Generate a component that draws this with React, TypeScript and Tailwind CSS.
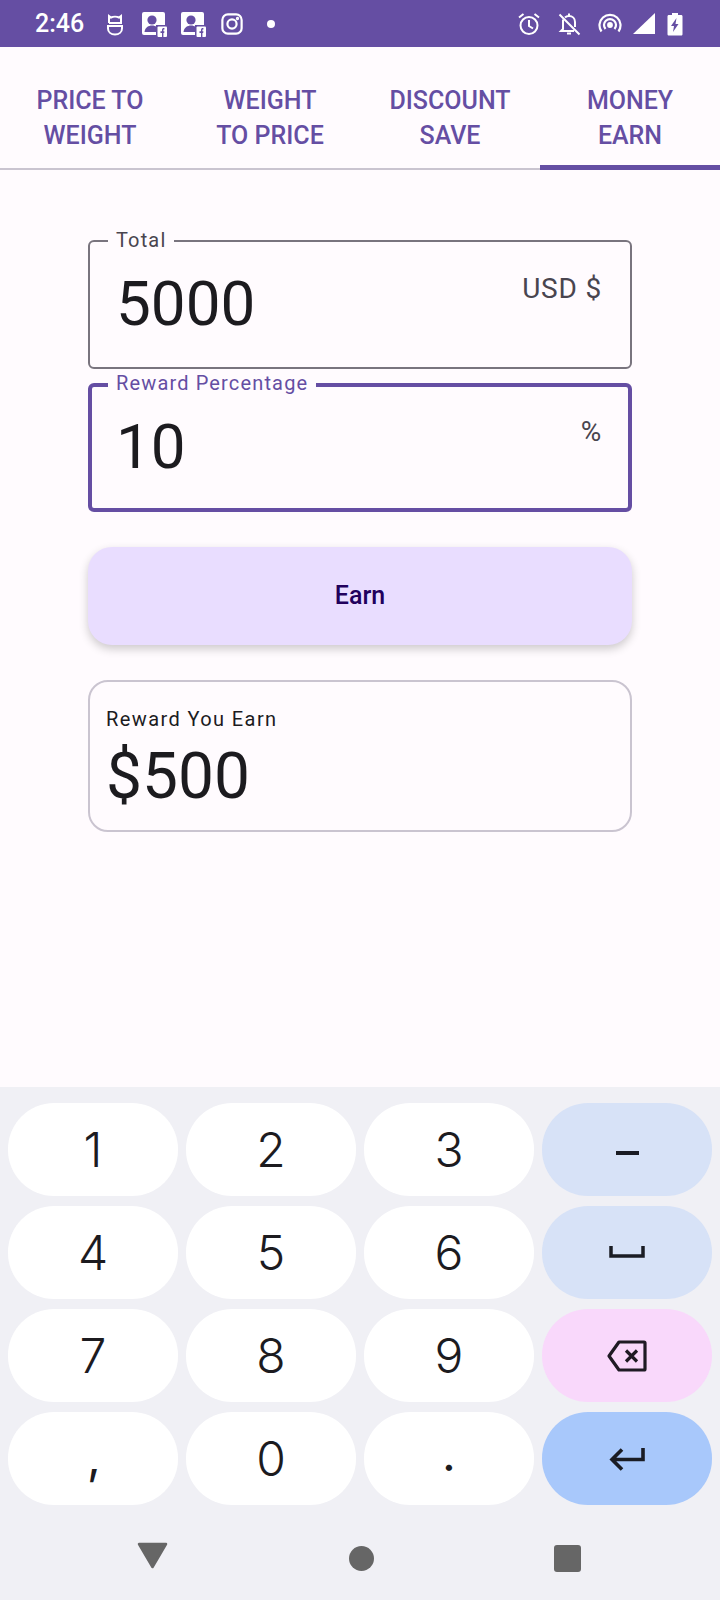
const tabs = [
  ['PRICE TO', 'WEIGHT'],
  ['WEIGHT', 'TO PRICE'],
  ['DISCOUNT', 'SAVE'],
  ['MONEY', 'EARN'],
];

const FbContact = () => (
  <svg width="26" height="26" viewBox="0 0 26 26">
    <rect x="1" y="1" width="23" height="23" rx="2" fill="#fff" />
    <circle cx="11" cy="9" r="4.6" fill="#654ea3" />
    <path d="M3.5 21c.5-4.5 4-6.5 7.500-6.500 2 0 3.500.5 4.500 1.500v5z" fill="#654ea3" />
    <rect x="15" y="14" width="11" height="12" fill="#654ea3" />
    <rect x="16.500" y="15.500" width="9.500" height="10.500" rx="1" fill="#fff" />
    <path d="M21 26v-4h-1.500v-1.800H21v-1.400c0-1.300.8-1.900 2.400-1.800v1.600c-.8 0-1 .1-1 .6v1h1l-.2 1.800h-.8v4z" fill="#654ea3" />
  </svg>
);

const StatusBar = () => (
  <div className="flex h-[47px] items-center justify-between bg-[#654ea3] pl-[35px] pr-[37px]">
    <div className="flex items-center">
      <span className="text-[25px] font-medium leading-none text-white">2:46</span>
      <svg className="ml-[22px]" width="18" height="24" viewBox="0 0 18 24" fill="none" stroke="#fff" strokeWidth="2">
        <path d="M3 11V4l2 1.500C7 4.500 11 4.500 13 5.500L15 4v7H3" />
        <path d="M2 14h14v2.500C16 20 13 22.500 9 22.500S2 20 2 16.500z" />
        <path d="M6.500 8v.1M11.500 8v.1" />
      </svg>
      <div className="ml-[17px]"><FbContact /></div>
      <div className="ml-[13px]"><FbContact /></div>
      <svg className="ml-[15px]" width="22" height="22" viewBox="0 0 24 24" fill="none" stroke="#fff" strokeWidth="2.400">
        <rect x="1.500" y="1.500" width="21" height="21" rx="6" />
        <circle cx="12" cy="12" r="5" />
        <circle cx="18" cy="6" r=".6" fill="#fff" />
      </svg>
      <span className="ml-[24px] h-[8px] w-[8px] rounded-full bg-white" />
    </div>
    <div className="flex items-center">
      <svg width="24" height="24" viewBox="0 0 24 24" fill="none" stroke="#fff" strokeWidth="2">
        <circle cx="12" cy="13.500" r="8.500" />
        <path d="M12 8v6l4 2.500M2 5.500 6.500 2M22 5.500 17.500 2" />
      </svg>
      <svg className="ml-[16px]" width="24" height="24" viewBox="0 0 24 24" fill="none" stroke="#fff" strokeWidth="2">
        <path d="M6 7.500V17l-2 2h13M8 5.500C9 4.500 10.500 4 12 4c3.500 0 6 2.500 6 6v5" />
        <path d="M12 1.500V4M10 21.500h4M2.500 2.500l20 20" />
      </svg>
      <svg className="ml-[17px]" width="24" height="24" viewBox="0 0 24 24" fill="none" stroke="#fff" strokeWidth="2.200">
        <path d="M3.500 19.500a10.500 10.500 0 1 1 17 0" />
        <path d="M7.500 17a6 6 0 1 1 9 0" />
        <circle cx="12" cy="13" r="1.800" fill="#fff" />
      </svg>
      <svg className="ml-[10px]" width="24" height="24" viewBox="0 0 24 24">
        <path d="M1 22 23 1v21z" fill="#fff" />
      </svg>
      <svg className="ml-[11px]" width="16" height="24" viewBox="0 0 16 24">
        <path d="M5 1h6v2h3c1 0 1.500.5 1.500 1.500V22c0 1-.5 1.500-1.500 1.500H2C1 23.500.5 23 .5 22V4.500C.5 3.500 1 3 2 3h3z" fill="#fff" />
        <path d="M9.500 6 4 14h3l-1 6 5.500-8H8.500z" fill="#654ea3" />
      </svg>
    </div>
  </div>
);

const Tabs = () => (
  <div className="flex h-[123px] border-b-2 border-[#cac4d0]">
    {tabs.map((tab, i) => (
      <div key={tab[0]} className="relative flex-1 pt-[36px] text-center text-[25px] font-medium leading-[35px] text-[#654ea3]">
        <div>{tab[0]}</div>
        <div>{tab[1]}</div>
        {i === 3 && <div className="absolute inset-x-0 bottom-[-2px] h-[5px] bg-[#654ea3]" />}
      </div>
    ))}
  </div>
);

type FieldProps = { label: string; value: string; suffix: string; focused?: boolean };

const Field = ({ label, value, suffix, focused }: FieldProps) => (
  <div className={`relative h-[129px] rounded-[6px] ${focused ? 'border-[4px] border-[#654ea3]' : 'border-2 border-[#79747e]'}`}>
    <span className={`absolute bg-[#fffbfe] px-[8px] text-[20px] leading-[24px] tracking-[1.15px] ${focused ? 'left-[16px] top-[-16px] text-[#654ea3]' : 'left-[18px] top-[-14px] text-[#49454f]'}`}>
      {label}
    </span>
    <div className={`flex items-start justify-between ${focused ? 'pl-[24px] pr-[26px] pt-[22px]' : 'pl-[26px] pr-[28px] pt-[24px]'}`}>
      <span className="text-[62px] leading-[76px] text-[#1c1b1f]">{value}</span>
      <span className="pt-[5px] text-[28px] leading-[36px] tracking-[0.8px] text-[#49454f]">{suffix}</span>
    </div>
  </div>
);

const keys = ['1', '2', '3', '4', '5', '6', '7', '8', '9', ',', '0', '.'];

const Key = ({ className, children }: { className: string; children: React.ReactNode }) => (
  <div className={`flex h-[93px] items-center justify-center rounded-[46px] ${className}`}>{children}</div>
);

const digitKey = "bg-white font-['Inter',sans-serif] text-[48px] font-light text-[#1c1b1f]";

const Keyboard = () => (
  <div className="bg-[#f0f0f5] px-[8px] pt-[16px]">
    <div className="grid grid-cols-4 gap-x-[8px] gap-y-[10px]">
      {keys.slice(0, 3).map((k) => <Key key={k} className={digitKey}>{k}</Key>)}
      <Key className="bg-[#d7e2f7]">
        <span className="mt-[7px] h-[4px] w-[23px] bg-[#1a1c24]" />
      </Key>
      {keys.slice(3, 6).map((k) => <Key key={k} className={digitKey}>{k}</Key>)}
      <Key className="bg-[#d7e2f7]">
        <svg className="mt-[-2px]" width="36" height="14" viewBox="0 0 36 14" fill="none" stroke="#1a1c24" strokeWidth="3.500">
          <path d="M2 1v10h32V1" />
        </svg>
      </Key>
      {keys.slice(6, 9).map((k) => <Key key={k} className={digitKey}>{k}</Key>)}
      <Key className="bg-[#f9d8fb]">
        <svg width="40" height="32" viewBox="0 0 40 32" fill="none" stroke="#1f1a24" strokeWidth="3.200" strokeLinejoin="round">
          <path d="M12 2h25a1 1 0 0 1 1 1v26a1 1 0 0 1-1 1H12L2 16z" />
          <path d="M19 10.500l11 11M30 10.500l-11 11" />
        </svg>
      </Key>
      {keys.slice(9).map((k) => (
        <Key key={k} className={digitKey}>
          <span className={k === '.' ? 'mb-[9px] font-normal' : k === ',' ? 'mb-[3px] ml-[2px] font-normal' : ''}>{k}</span>
        </Key>
      ))}
      <Key className="bg-[#a8c8fb]">
        <svg width="36" height="26" viewBox="0 0 36 26" fill="none" stroke="#1a1c24" strokeWidth="3.600">
          <path d="M34 2v11.500H4M13 3.500 3 13.500l10 10" />
        </svg>
      </Key>
    </div>
    <div className="flex h-[95px] items-center justify-between pl-[129px] pr-[131px] pt-[12px]">
      <svg className="mb-[6px]" width="31" height="27" viewBox="0 0 31 27"><path d="M2 2h27L15.500 25z" fill="#666" stroke="#666" strokeWidth="2.500" strokeLinejoin="round" /></svg>
      <span className="h-[25px] w-[25px] rounded-full bg-[#666]" />
      <span className="h-[27px] w-[27px] rounded-[3px] bg-[#666]" />
    </div>
  </div>
);

export default function App() {
  return (
    <div className="flex h-[1600px] w-[720px] flex-col overflow-hidden bg-[#fffbfe] font-['Roboto',sans-serif]">
      <StatusBar />
      <Tabs />
      <div className="flex-1 px-[88px] pt-[70px]">
        <div className="flex flex-col gap-[14px]">
          <Field label="Total" value="5000" suffix="USD $" />
          <Field label="Reward Percentage" value="10" suffix="%" focused />
        </div>
        <div className="mt-[35px] flex h-[98px] items-center justify-center rounded-[24px] bg-[#e9ddff] text-[25px] font-medium text-[#21005d] shadow-[0_4px_10px_rgba(0,0,0,0.2)]">
          Earn
        </div>
        <div className="mt-[35px] h-[152px] rounded-[20px] border-2 border-[#cac4d0] px-[16px] pt-[24px]">
          <div className="text-[20px] leading-[26px] tracking-[1.4px] text-[#1c1b1f]">Reward You Earn</div>
          <div className="mt-[7px] text-[64px] leading-[76px] text-[#1c1b1f]">$500</div>
        </div>
      </div>
      <Keyboard />
    </div>
  );
}
